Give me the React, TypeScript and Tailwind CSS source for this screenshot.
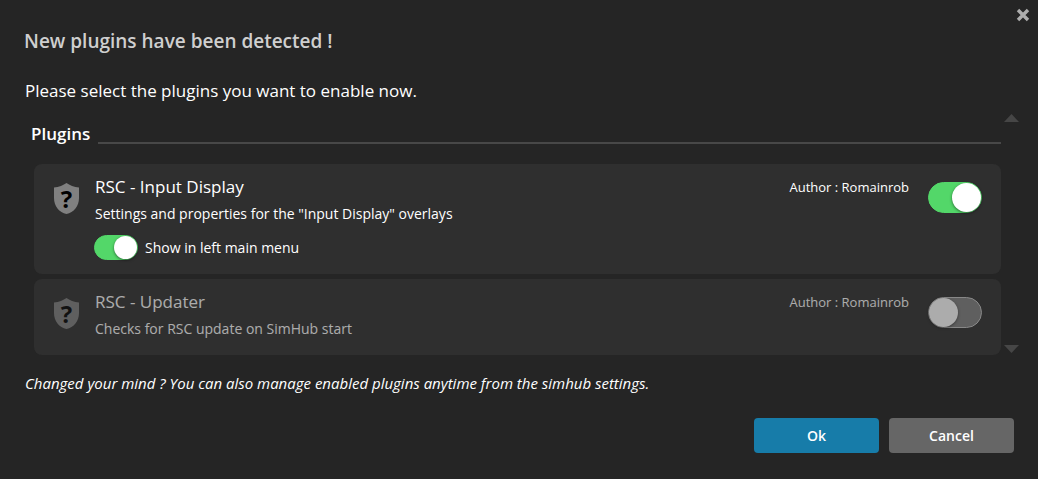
import { useState } from "react";

type Plugin = {
  id: string;
  name: string;
  description: string;
  author: string;
  enabled: boolean;
  showInMenu: boolean;
};

const initialPlugins: Plugin[] = [
  {
    id: "input-display",
    name: "RSC - Input Display",
    description: 'Settings and properties for the "Input Display" overlays',
    author: "Romainrob",
    enabled: true,
    showInMenu: true,
  },
  {
    id: "updater",
    name: "RSC - Updater",
    description: "Checks for RSC update on SimHub start",
    author: "Romainrob",
    enabled: false,
    showInMenu: false,
  },
];

const switchBase =
  "shrink-0 cursor-pointer appearance-none rounded-full border border-[#c4c4c4] bg-[#7f7f7f] before:block before:rounded-full before:bg-white before:shadow-[0_1px_3px_rgba(0,0,0,0.5)] checked:border-[#53d769] checked:bg-[#53d769]";

function ShieldIcon() {
  return (
    <span className="relative mt-[19px] flex h-[31px] w-[25px] shrink-0 items-center justify-center">
      <svg viewBox="0 0 25 31" className="absolute inset-0 h-full w-full" aria-hidden="true">
        <path
          d="M12.5 0C9.5 2.2 4.8 4 0 4.6V15C0 23.5 5.2 29.3 12.5 31C19.8 29.3 25 23.5 25 15V4.6C20.2 4 15.5 2.2 12.5 0Z"
          fill="#808080"
        />
      </svg>
      <span className="relative text-2xl leading-none font-bold text-black">?</span>
    </span>
  );
}

function PluginCard({ plugin, onChange }: { plugin: Plugin; onChange: (p: Plugin) => void }) {
  return (
    <li className="rounded-lg bg-[#2f2f2f]">
      <div
        className={
          plugin.enabled
            ? "flex items-start pr-[19px] pb-3.5 pl-5"
            : "flex items-start pr-[19px] pb-3.5 pl-5 opacity-60"
        }
      >
        <ShieldIcon />
        <div className="ml-4 min-w-0 flex-1 pt-[11px]">
          <h3 className="text-[17px] leading-6">{plugin.name}</h3>
          <p className="mt-[3px] text-sm leading-6">{plugin.description}</p>
          {plugin.enabled && (
            <label className="mt-[9px] -ml-px flex w-fit cursor-pointer items-center gap-[7px] text-sm leading-6">
              <input
                type="checkbox"
                role="switch"
                checked={plugin.showInMenu}
                onChange={(e) => onChange({ ...plugin, showInMenu: e.target.checked })}
                className={`${switchBase} h-[25px] w-11 before:size-[23px] checked:before:ml-[19px]`}
              />
              Show in left main menu
            </label>
          )}
        </div>
        <p className="mt-[11px] mr-[19px] text-[13px] leading-6">Author : {plugin.author}</p>
        <input
          type="checkbox"
          role="switch"
          aria-label={`Enable ${plugin.name}`}
          checked={plugin.enabled}
          onChange={(e) => onChange({ ...plugin, enabled: e.target.checked })}
          className={`${switchBase} mt-[18px] h-[31px] w-[54px] before:size-[29px] checked:before:ml-[23px]`}
        />
      </div>
    </li>
  );
}

export default function App() {
  const [plugins, setPlugins] = useState(initialPlugins);

  const update = (next: Plugin) =>
    setPlugins((all) => all.map((p) => (p.id === next.id ? next : p)));

  return (
    <main className="relative flex min-h-screen flex-col bg-[#252525] pb-[26px] font-['Open_Sans','Noto_Sans',sans-serif] text-white">
      <button
        type="button"
        aria-label="Close"
        className="absolute top-2 right-2 flex size-[14px] items-center justify-center"
      >
        <svg viewBox="0 0 14 14" className="size-full" aria-hidden="true">
          <path d="M2 2L12 12M12 2L2 12" stroke="#adadad" strokeWidth="3.4" />
        </svg>
      </button>

      <h1 className="mt-[27px] px-6 text-[19px] leading-7 font-semibold text-[#cfcfcf]">
        New plugins have been detected !
      </h1>
      <p className="mt-6 px-[25px] text-[17px] leading-6">
        Please select the plugins you want to enable now.
      </p>

      <div className="mt-[9px] flex gap-[3px] pr-[19px] pl-[34px]">
        <section className="min-w-0 flex-1">
          <div className="-ml-[3px] flex items-end gap-2 pt-2.5">
            <h2 className="text-[17px] leading-6 font-semibold">Plugins</h2>
            <span className="mb-0.5 h-0.5 flex-1 bg-[#484848]" />
          </div>
          <ul className="mt-[18px] flex flex-col gap-[5px]">
            {plugins.map((plugin) => (
              <PluginCard key={plugin.id} plugin={plugin} onChange={update} />
            ))}
          </ul>
        </section>
        <div className="flex flex-col justify-between py-0.5">
          <button type="button" aria-label="Scroll up">
            <svg viewBox="0 0 15 8" className="h-2 w-[15px]" aria-hidden="true">
              <path d="M0 8L7.5 0L15 8Z" fill="#464646" />
            </svg>
          </button>
          <button type="button" aria-label="Scroll down">
            <svg viewBox="0 0 15 8" className="h-2 w-[15px]" aria-hidden="true">
              <path d="M0 0L7.5 8L15 0Z" fill="#464646" />
            </svg>
          </button>
        </div>
      </div>

      <p className="mt-4 px-[25px] text-[15px] leading-6 italic">
        Changed your mind ? You can also manage enabled plugins anytime from the simhub settings.
      </p>

      <div className="mt-[23px] flex justify-end gap-2.5 px-6 text-sm font-semibold">
        <button type="button" className="h-[35px] w-[125px] rounded bg-[#177ca9]">
          Ok
        </button>
        <button type="button" className="h-[35px] w-[125px] rounded bg-[#666666]">
          Cancel
        </button>
      </div>
    </main>
  );
}
